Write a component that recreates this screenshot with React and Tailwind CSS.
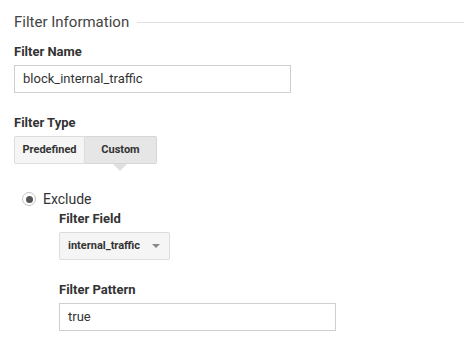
import React from 'react';

const App = () => {
    return (
        <div className="w-[464px] h-[346px] bg-white text-[#333] font-['Roboto',sans-serif] pl-[14px] pt-[12px] overflow-hidden">
            <div className="flex items-center">
                <h2 className="text-[15px] leading-[20px] text-[#444]">Filter Information</h2>
                <div className="flex-1 h-px bg-[#e0e0e0] ml-[8px]" />
            </div>

            <div className="mt-[12px] text-[13px] leading-[16px] font-bold text-[#333]">Filter Name</div>
            <div className="mt-[5px] w-[277px] h-[28px] border border-[#cfcfcf] flex items-center px-[8px] text-[13px] text-[#333]">
                block_internal_traffic
            </div>

            <div className="mt-[22px] text-[13px] leading-[16px] font-bold text-[#333]">Filter Type</div>
            <div className="mt-[5px] flex">
                <div className="h-[28px] w-[71px] flex items-center justify-center text-[11px] font-bold text-[#333] bg-[#f5f5f5] border border-[#dcdcdc] rounded-l-[2px]">
                    Predefined
                </div>
                <div className="relative h-[28px] w-[72px] flex items-center justify-center text-[11px] font-bold text-[#333] bg-[#e6e6e6] border border-l-0 border-[#d6d6d6] rounded-r-[2px]">
                    Custom
                    <div className="absolute top-[27px] left-[28px] w-0 h-0 border-l-[7px] border-r-[7px] border-t-[7px] border-l-transparent border-r-transparent border-t-[#e0e0e0]" />
                </div>
            </div>

            <div className="mt-[27px] ml-[8px] flex items-center">
                <div className="w-[14px] h-[14px] rounded-full border border-[#c4c4c4] flex items-center justify-center">
                    <div className="w-[7px] h-[7px] rounded-full bg-[#555]" />
                </div>
                <span className="ml-[7px] text-[14px] leading-[16px] text-[#333]">Exclude</span>
            </div>

            <div className="ml-[45px]">
                <div className="mt-[4px] text-[13px] leading-[16px] font-bold text-[#333]">Filter Field</div>
                <div className="mt-[5px] w-[111px] h-[28px] bg-[#f5f5f5] border border-[#dcdcdc] rounded-[2px] flex items-center justify-between pl-[8px] pr-[9px]">
                    <span className="text-[11px] font-bold text-[#333]">internal_traffic</span>
                    <span className="w-0 h-0 border-l-[4px] border-r-[4px] border-t-[4px] border-l-transparent border-r-transparent border-t-[#888]" />
                </div>

                <div className="mt-[22px] text-[13px] leading-[16px] font-bold text-[#333]">Filter Pattern</div>
                <div className="mt-[5px] w-[277px] h-[28px] border border-[#cfcfcf] flex items-center px-[8px] text-[13px] text-[#333]">
                    true
                </div>
            </div>
        </div>
    );
};

export default App;
